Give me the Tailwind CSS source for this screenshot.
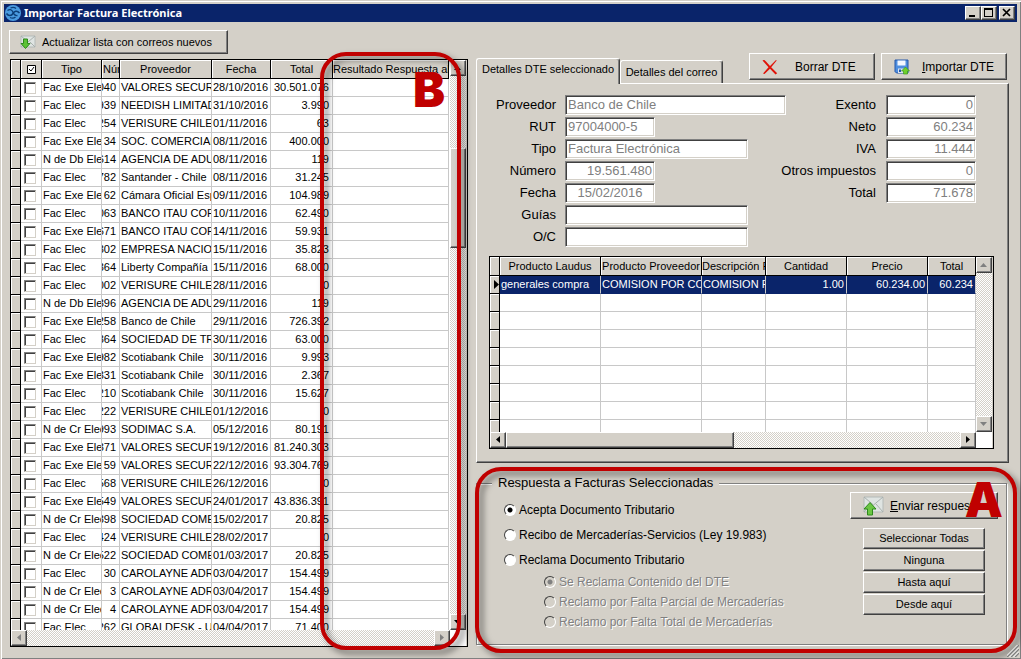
<!DOCTYPE html>
<html lang="es">
<head>
  <meta charset="UTF-8" />
  <meta name="viewport" content="width=device-width, initial-scale=1" />
  <title>Importar Factura Electrónica</title>
  <script src="https://cdn.jsdelivr.net/npm/@tailwindcss/browser@4"></script>
</head>
<body class="h-screen flex flex-col overflow-hidden bg-[#d4d0c8] p-1 pb-3 font-['Liberation_Sans',Arial,sans-serif] text-[11px] text-black shadow-[inset_1px_1px_#d4d0c8,inset_2px_2px_#fff,inset_-1px_-1px_#808080]">

  <!-- title bar -->
  <header class="h-[18px] shrink-0 flex items-center bg-[#0a246a] pl-px pr-0.5">
    <svg class="size-4" viewBox="0 0 16 16">
      <circle cx="8" cy="8" r="8" fill="#4a9be0" />
      <path d="M1.500 8.500c2 3 5 2.500 6.500 0s4-3.500 6.500-.5" fill="none" stroke="#0d3f78" stroke-width="1.500" />
      <path d="M2.500 5.500c2-1.500 4-1 5 .8s1.500 5 5 4.200M5 12.500c2 1 4 .8 5.500-.5M5.500 3c2-1 4-.8 5.500.5" fill="none" stroke="#0d3f78" stroke-width="1.300" />
    </svg>
    <h1 class="flex-1 pl-[3px] font-['Noto_Sans',sans-serif] text-[11px] leading-[18px] font-bold text-white">Importar Factura Electrónica</h1>
    <div class="flex">
      <button aria-label="Minimizar" class="w-4 h-3.5 bg-[#d4d0c8] border border-t-white border-l-white border-r-[#404040] border-b-[#404040] shadow-[inset_-1px_-1px_#808080]">
        <svg class="block" width="14" height="12" viewBox="0 0 14 12"><path d="M3 8h6v2H3z" /></svg>
      </button>
      <button aria-label="Maximizar" class="w-4 h-3.5 bg-[#d4d0c8] border border-t-white border-l-white border-r-[#404040] border-b-[#404040] shadow-[inset_-1px_-1px_#808080]">
        <svg class="block" width="14" height="12" viewBox="0 0 14 12"><path d="M2 1h9v9H2zM3 3v6h7V3z" fill-rule="evenodd" /></svg>
      </button>
      <button aria-label="Cerrar" class="ml-0.5 w-4 h-3.5 bg-[#d4d0c8] border border-t-white border-l-white border-r-[#404040] border-b-[#404040] shadow-[inset_-1px_-1px_#808080]">
        <svg class="block" width="14" height="12" viewBox="0 0 14 12"><path d="M3 2l7 7M10 2l-7 7" stroke="#000" stroke-width="1.7" /></svg>
      </button>
    </div>
  </header>

  <main class="flex-1 min-h-0 flex gap-2 pl-1.5 pr-2">

    <!-- left: list of invoices -->
    <section class="flex-[458_1_0%] min-w-0 flex flex-col pt-2">
      <div class="flex -ml-px">
        <button class="h-6 w-[219px] flex items-center gap-1.5 pl-2.5 bg-[#d4d0c8] border border-t-white border-l-white border-r-[#404040] border-b-[#404040] shadow-[inset_-1px_-1px_#808080]">
          <svg class="w-4 h-3.5" viewBox="0 0 16 14">
            <path d="M1 1h14v11H1z" fill="#dfe4e2" stroke="#b4bab8" />
            <path d="M1 1l7 6 7-6M1 12l5-5M15 12l-5-5" fill="none" stroke="#a9b0ae" />
            <path d="M3.500 4h4v4.500h2.500l-4.500 5-4.500-5h2.500z" fill="#5cc234" stroke="#2d8a1c" />
          </svg>
          <span>Actualizar lista con correos nuevos</span>
        </button>
      </div>

      <div class="relative mt-[5px] flex-1 min-h-0 flex flex-col border border-black pr-px">
        <div class="flex-1 min-h-0 flex">
          <div class="flex-1 min-w-0 overflow-hidden bg-white pr-px">
            <table class="w-full table-fixed border-separate border-spacing-0">
              <colgroup>
                <col class="w-2.5" /><col class="w-[21px]" /><col class="w-[60px]" /><col class="w-[18px]" />
                <col class="w-[92px]" /><col class="w-[59px]" /><col class="w-[62px]" /><col />
              </colgroup>
              <thead>
                <tr class="h-[19px] bg-[#d4d0c8] whitespace-nowrap *:p-0 *:font-normal *:overflow-hidden *:border-r *:border-b *:border-black *:shadow-[inset_1px_1px_#fff]">
                  <th></th>
                  <th>
                    <svg class="mx-auto" width="9" height="9" viewBox="0 0 9 9"><path d="M.5.5h8v8h-8z" fill="#fff" stroke="#000" /><path d="M2 4l2 2 3-4" fill="none" stroke="#000" /></svg>
                  </th>
                  <th>Tipo</th>
                  <th><div class="text-left pl-px">Núm</div></th>
                  <th>Proveedor</th>
                  <th>Fecha</th>
                  <th>Total</th>
                  <th><div class="text-left">Resultado Respuesta al</div></th>
                </tr>
              </thead>
              <tbody id="facturas"></tbody>
            </table>
          </div>
          <div class="w-4 flex flex-col bg-[conic-gradient(#fff_25%,#d4d0c8_0_50%,#fff_0_75%,#d4d0c8_0)] bg-[length:2px_2px]">
            <button aria-label="Subir" class="size-4 bg-[#d4d0c8] border border-t-white border-l-white border-r-[#404040] border-b-[#404040] shadow-[inset_-1px_-1px_#808080]">
              <svg class="block" width="14" height="14" viewBox="0 0 14 14"><path d="M3 9l3.500-4L10 9z" /></svg>
            </button>
            <div class="grow-[72]"></div>
            <div class="h-[100px] bg-[#d4d0c8] border border-t-white border-l-white border-r-[#404040] border-b-[#404040] shadow-[inset_-1px_-1px_#808080]"></div>
            <div class="grow-[366]"></div>
            <button aria-label="Bajar" class="size-4 bg-[#d4d0c8] border border-t-white border-l-white border-r-[#404040] border-b-[#404040] shadow-[inset_-1px_-1px_#808080]">
              <svg class="block" width="14" height="14" viewBox="0 0 14 14"><path d="M3 5l3.500 4L10 5z" /></svg>
            </button>
          </div>
        </div>
        <div class="h-4 flex bg-white">
          <div class="flex-1 flex justify-between bg-[conic-gradient(#fff_25%,#d4d0c8_0_50%,#fff_0_75%,#d4d0c8_0)] bg-[length:2px_2px]">
            <button aria-label="Izquierda" class="size-4 bg-[#d4d0c8] border border-t-white border-l-white border-r-[#404040] border-b-[#404040] shadow-[inset_-1px_-1px_#808080]">
              <svg class="block" width="14" height="14" viewBox="0 0 14 14"><path d="M9 3L5 6.500 9 10z" fill="#808080" /></svg>
            </button>
            <button aria-label="Derecha" class="size-4 bg-[#d4d0c8] border border-t-white border-l-white border-r-[#404040] border-b-[#404040] shadow-[inset_-1px_-1px_#808080]">
              <svg class="block" width="14" height="14" viewBox="0 0 14 14"><path d="M5 3l4 3.500L5 10z" fill="#808080" /></svg>
            </button>
          </div>
          <div class="w-4"></div>
        </div>

        <!-- callout B -->
        <div class="pointer-events-none absolute -top-2 -bottom-1 right-1.5 w-[141px] rounded-[26px] border-4 border-[#c00000] drop-shadow-[4px_4px_3px_rgba(0,0,0,0.5)]"></div>
        <span class="pointer-events-none absolute top-1 right-[22px] font-['Inter',sans-serif] text-[48px] leading-[52px] font-black text-[#c00000]">B</span>
      </div>
    </section>

    <!-- right: detail and answer -->
    <section class="flex-[533_1_0%] min-w-0 flex flex-col pt-[31px]">
      <div class="h-[30px] shrink-0 flex items-start justify-between">
        <div role="tablist" class="self-end flex items-end">
          <button role="tab" aria-selected="true" class="relative z-10 -mb-px h-[26px] w-[144px] pb-1 bg-[#d4d0c8] rounded-t-[3px] border border-b-0 border-t-white border-l-white border-r-[#404040] shadow-[inset_-1px_0_#808080]">Detalles DTE seleccionado</button>
          <button role="tab" aria-selected="false" class="h-[23px] w-[103px] bg-[#d4d0c8] rounded-t-[3px] border border-b-0 border-t-white border-l-white border-r-[#404040] shadow-[inset_-1px_0_#808080]">Detalles del correo</button>
        </div>
        <div class="flex gap-1.5 pr-0.5 text-[12px]">
          <button class="h-[27px] w-[126px] flex items-center pl-3 bg-[#d4d0c8] border border-t-white border-l-white border-r-[#404040] border-b-[#404040] shadow-[inset_-1px_-1px_#808080]">
            <svg class="size-4" viewBox="0 0 16 16"><path d="M.5 1.500c1-1 2.500-.5 3.500 1l4 4.500 6-6 .7.500L9.200 8.300l6 6-1.700 1.200L8 9.700 2.500 15 1 14.500l5.500-6.200z" fill="#e01208" /></svg>
            <span class="pl-[17px]">Borrar DTE</span>
          </button>
          <button class="h-[27px] w-[126px] flex items-center pl-3 bg-[#d4d0c8] border border-t-white border-l-white border-r-[#404040] border-b-[#404040] shadow-[inset_-1px_-1px_#808080]">
            <svg class="size-4" viewBox="0 0 16 16">
              <path d="M1 1h13v13H2.500L1 12.500z" fill="#4f8fe0" stroke="#2456a8" />
              <path d="M3.500 1.500h8v5h-8z" fill="#f4f8ff" />
              <path d="M4 9.500h7V14H4z" fill="#dbe4f0" />
              <path d="M5 10.500h2V13H5z" fill="#2456a8" />
              <path d="M11.500 8l4 4h-2v3h-4v-3h-2z" fill="#6fd02c" stroke="#3d9a1a" stroke-width=".7" />
            </svg>
            <span class="pl-3"><u>I</u>mportar DTE</span>
          </button>
        </div>
      </div>

      <div role="tabpanel" class="flex-1 min-h-0 flex flex-col border border-t-white border-l-white border-r-[#404040] border-b-[#404040] shadow-[inset_-1px_-1px_#808080] pt-[11px] pb-[13px] pl-3 pr-3.5">
        <form class="flex justify-between items-start pr-[18px] text-[13px] whitespace-nowrap [&_input]:h-5 [&_input]:px-0.5 [&_input]:bg-white [&_input]:text-[#808080] [&_input]:border [&_input]:border-t-[#808080] [&_input]:border-l-[#808080] [&_input]:border-r-white [&_input]:border-b-white [&_input]:shadow-[inset_1px_1px_#404040,inset_-1px_-1px_#d4d0c8]">
          <div class="grid grid-cols-[67px_auto] gap-x-[9px] gap-y-0.5 leading-5 *:[label]:text-right">
            <label for="proveedor">Proveedor</label><input id="proveedor" class="w-[221px]" value="Banco de Chile" disabled />
            <label for="rut">RUT</label><input id="rut" class="w-[90px]" value="97004000-5" disabled />
            <label for="tipo">Tipo</label><input id="tipo" class="w-[183px]" value="Factura Electrónica" disabled />
            <label for="numero">Número</label><input id="numero" class="w-[90px] text-right" value="19.561.480" disabled />
            <label for="fecha">Fecha</label><input id="fecha" class="w-[90px] text-center" value="15/02/2016" disabled />
            <label for="guias">Guías</label><input id="guias" class="w-[183px]" />
            <label for="oc">O/C</label><input id="oc" class="w-[183px]" />
          </div>
          <!-- the longest label may reach left over the first column's short fields -->
          <div class="grid grid-cols-[80px_90px] gap-x-2.5 gap-y-0.5 leading-5 *:[label]:justify-self-end *:[input]:text-right">
            <label for="exento">Exento</label><input id="exento" value="0" disabled />
            <label for="neto">Neto</label><input id="neto" value="60.234" disabled />
            <label for="iva">IVA</label><input id="iva" value="11.444" disabled />
            <label for="otros">Otros impuestos</label><input id="otros" value="0" disabled />
            <label for="total">Total</label><input id="total" value="71.678" disabled />
          </div>
        </form>

        <div class="mt-[9px] flex-1 min-h-0 flex flex-col border border-black pr-px">
          <div class="flex-1 min-h-0 flex">
            <div class="flex-1 min-w-0 overflow-hidden bg-white">
              <table class="w-full table-fixed border-separate border-spacing-0 whitespace-nowrap">
                <colgroup>
                  <col class="w-2.5" /><col class="w-[101px]" /><col class="w-[101px]" /><col class="w-16" />
                  <col class="w-[81px]" /><col class="w-[81px]" /><col />
                </colgroup>
                <thead>
                  <tr class="h-[19px] bg-[#d4d0c8] *:p-0 *:font-normal *:overflow-hidden *:border-r *:border-b *:border-black *:shadow-[inset_1px_1px_#fff]">
                    <th></th><th>Producto Laudus</th><th>Producto Proveedor</th>
                    <th><div class="text-left">Descripción Proveedor</div></th>
                    <th>Cantidad</th><th>Precio</th><th>Total</th>
                  </tr>
                </thead>
                <tbody id="lineas">
                  <tr class="h-[18px] bg-[#0a246a] text-white *:p-0 *:overflow-hidden *:border-r *:border-r-[#c8c8c8] *:border-b *:border-b-[#0a246a]">
                    <td class="bg-[#d4d0c8] border-r-black! border-b-black! shadow-[inset_1px_1px_#fff]"><svg class="ml-1" width="5" height="9" viewBox="0 0 5 9"><path d="M0 0l5 4.500L0 9z" /></svg></td>
                    <td><div class="pl-px">generales compra</div></td>
                    <td><div class="pl-px">COMISION POR COBRANZA</div></td>
                    <td><div class="pl-px">COMISION POR COBRANZA</div></td>
                    <td class="text-right"><div class="pr-0.5">1.00</div></td>
                    <td class="text-right"><div class="pr-0.5">60.234.00</div></td>
                    <td class="text-right"><div class="pr-0.5">60.234</div></td>
                  </tr>
                </tbody>
              </table>
            </div>
            <div class="w-4 flex flex-col justify-between bg-[conic-gradient(#fff_25%,#d4d0c8_0_50%,#fff_0_75%,#d4d0c8_0)] bg-[length:2px_2px]">
              <button aria-label="Subir" class="size-4 bg-[#d4d0c8] border border-t-white border-l-white border-r-[#404040] border-b-[#404040] shadow-[inset_-1px_-1px_#808080]">
                <svg class="block" width="14" height="14" viewBox="0 0 14 14"><path d="M3 9l3.500-4L10 9z" fill="#808080" /></svg>
              </button>
              <button aria-label="Bajar" class="size-4 bg-[#d4d0c8] border border-t-white border-l-white border-r-[#404040] border-b-[#404040] shadow-[inset_-1px_-1px_#808080]">
                <svg class="block" width="14" height="14" viewBox="0 0 14 14"><path d="M3 5l3.500 4L10 5z" fill="#808080" /></svg>
              </button>
            </div>
          </div>
          <div class="h-4 flex bg-white">
            <div class="flex-1 flex bg-[conic-gradient(#fff_25%,#d4d0c8_0_50%,#fff_0_75%,#d4d0c8_0)] bg-[length:2px_2px]">
              <button aria-label="Izquierda" class="size-4 bg-[#d4d0c8] border border-t-white border-l-white border-r-[#404040] border-b-[#404040] shadow-[inset_-1px_-1px_#808080]">
                <svg class="block" width="14" height="14" viewBox="0 0 14 14"><path d="M9 3L5 6.500 9 10z" /></svg>
              </button>
              <div class="grow-[228] bg-[#d4d0c8] border border-t-white border-l-white border-r-[#404040] border-b-[#404040] shadow-[inset_-1px_-1px_#808080]"></div>
              <div class="grow-[228]"></div>
              <button aria-label="Derecha" class="size-4 bg-[#d4d0c8] border border-t-white border-l-white border-r-[#404040] border-b-[#404040] shadow-[inset_-1px_-1px_#808080]">
                <svg class="block" width="14" height="14" viewBox="0 0 14 14"><path d="M5 3l4 3.500L5 10z" /></svg>
              </button>
            </div>
            <div class="w-4"></div>
          </div>
        </div>
      </div>

      <div class="relative mt-3 pr-0.5 pb-0.5">
        <fieldset class="border border-[#808080] shadow-[1px_1px_#fff,inset_1px_1px_#fff]">
          <legend class="ml-[15px] px-1.5 bg-[#d4d0c8] text-[13px] leading-4">Respuesta a Facturas Seleccionadas</legend>
          <div class="flex justify-between pl-[27px] pr-2 pb-3 text-[12px]">
            <div class="pt-1.5 [&_label]:flex [&_label]:items-center [&_label]:gap-[3px] [&_input]:appearance-none [&_input]:size-3 [&_input]:rounded-full [&_input]:border [&_input]:border-t-[#404040] [&_input]:border-l-[#404040] [&_input]:border-r-white [&_input]:border-b-white">
              <label class="h-[25px]"><input type="radio" name="respuesta" checked class="bg-white checked:bg-[radial-gradient(#000_2px,#fff_3px)]" />Acepta Documento Tributario</label>
              <label class="h-[25px]"><input type="radio" name="respuesta" class="bg-white" />Recibo de Mercaderías-Servicios (Ley 19.983)</label>
              <label class="h-[25px]"><input type="radio" name="respuesta" class="bg-white" />Reclama Documento Tributario</label>
              <div class="pl-10 text-[#808080] [text-shadow:1px_1px_#fff]">
                <label class="h-5"><input type="radio" name="reclamo" checked disabled class="checked:bg-[radial-gradient(#808080_2px,#d4d0c8_3px)]" />Se Reclama Contenido del DTE</label>
                <label class="h-5"><input type="radio" name="reclamo" disabled />Reclamo por Falta Parcial de Mercaderías</label>
                <label class="h-5"><input type="radio" name="reclamo" disabled />Reclamo por Falta Total de Mercaderías</label>
              </div>
            </div>
            <div class="flex flex-col items-end pt-px">
              <button class="h-[27px] w-[148px] flex items-center gap-1.5 pl-3 whitespace-nowrap overflow-hidden bg-[#d4d0c8] border border-t-white border-l-white border-r-[#404040] border-b-[#404040] shadow-[inset_-1px_-1px_#808080]">
                <svg class="w-[21px] h-5 shrink-0" viewBox="0 0 21 20">
                  <path d="M1 1h19v15H1z" fill="#dfe4e2" stroke="#b4bab8" />
                  <path d="M1 1l9.500 8L20 1M1 16l7-8M20 16l-7-8" fill="none" stroke="#a9b0ae" />
                  <path d="M7 6.500l6 6.500H9.500v6h-5v-6H1z" fill="#6cc644" stroke="#2d8a1c" />
                </svg>
                <span><u>E</u>nviar respuestas</span>
              </button>
              <div class="mt-[9px] mr-[13px] w-[122px] flex flex-col gap-px text-[11px] *:h-[21px] *:bg-[#d4d0c8] *:border *:border-t-white *:border-l-white *:border-r-[#404040] *:border-b-[#404040] *:shadow-[inset_-1px_-1px_#808080]">
                <button>Seleccionar Todas</button>
                <button>Ninguna</button>
                <button>Hasta aquí</button>
                <button>Desde aquí</button>
              </div>
            </div>
          </div>
        </fieldset>

        <!-- callout A -->
        <div class="pointer-events-none absolute -top-2 -bottom-1.5 -left-px -right-2 rounded-[26px] border-4 border-[#c00000] drop-shadow-[4px_4px_3px_rgba(0,0,0,0.5)]"></div>
        <span class="pointer-events-none absolute -top-px right-1.5 font-['Inter',sans-serif] text-[48px] leading-[52px] font-black text-[#c00000]">A</span>
      </div>
    </section>
  </main>

  <!-- resize grip -->
  <svg class="absolute right-0.5 bottom-0.5" width="12" height="12" viewBox="0 0 12 12">
    <path d="M0 12L12 0M4 12l8-8M8 12l4-4" stroke="#808080" stroke-width="1.500" />
    <path d="M-1.500 12L12-1.500M2.500 12L12 2.500M6.500 12L12 6.500" stroke="#fff" />
  </svg>

  <script>
    const facturas = [
      ['Fac Exe Elec', '040', 'VALORES SECURITY', '28/10/2016', '30.501.076'],
      ['Fac Elec', '939', 'NEEDISH LIMITADA', '31/10/2016', '3.990'],
      ['Fac Elec', '254', 'VERISURE CHILE SPA', '01/11/2016', '63'],
      ['Fac Exe Elec', '34', 'SOC. COMERCIALIZADORA', '08/11/2016', '400.000'],
      ['N de Db Elec', '614', 'AGENCIA DE ADUANAS', '08/11/2016', '119'],
      ['Fac Elec', '782', 'Santander - Chile', '08/11/2016', '31.245'],
      ['Fac Exe Elec', '62', 'Cámara Oficial Española', '09/11/2016', '104.989'],
      ['Fac Elec', '063', 'BANCO ITAU CORPBANCA', '10/11/2016', '62.490'],
      ['Fac Exe Elec', '671', 'BANCO ITAU CORPBANCA', '14/11/2016', '59.931'],
      ['Fac Elec', '302', 'EMPRESA NACIONAL', '15/11/2016', '35.823'],
      ['Fac Elec', '364', 'Liberty Compañía de', '15/11/2016', '68.000'],
      ['Fac Elec', '002', 'VERISURE CHILE SPA', '28/11/2016', '0'],
      ['N de Db Elec', '396', 'AGENCIA DE ADUANAS', '29/11/2016', '119'],
      ['Fac Exe Elec', '258', 'Banco de Chile', '29/11/2016', '726.392'],
      ['Fac Elec', '364', 'SOCIEDAD DE TRANSPORTES', '30/11/2016', '63.000'],
      ['Fac Exe Elec', '982', 'Scotiabank Chile', '30/11/2016', '9.993'],
      ['Fac Exe Elec', '331', 'Scotiabank Chile', '30/11/2016', '2.367'],
      ['Fac Elec', '210', 'Scotiabank Chile', '30/11/2016', '15.627'],
      ['Fac Elec', '222', 'VERISURE CHILE SPA', '01/12/2016', '0'],
      ['N de Cr Elec', '993', 'SODIMAC S.A.', '05/12/2016', '80.191'],
      ['Fac Exe Elec', '371', 'VALORES SECURITY', '19/12/2016', '81.240.303'],
      ['Fac Exe Elec', '59', 'VALORES SECURITY', '22/12/2016', '93.304.769'],
      ['Fac Elec', '568', 'VERISURE CHILE SPA', '26/12/2016', '0'],
      ['Fac Exe Elec', '549', 'VALORES SECURITY', '24/01/2017', '43.836.391'],
      ['N de Cr Elec', '398', 'SOCIEDAD COMERCIAL', '15/02/2017', '20.825'],
      ['Fac Elec', '424', 'VERISURE CHILE SPA', '28/02/2017', '0'],
      ['N de Cr Elec', '522', 'SOCIEDAD COMERCIAL', '01/03/2017', '20.825'],
      ['Fac Elec', '30', 'CAROLAYNE ADRIANA', '03/04/2017', '154.499'],
      ['N de Cr Elec', '3', 'CAROLAYNE ADRIANA', '03/04/2017', '154.499'],
      ['N de Cr Elec', '4', 'CAROLAYNE ADRIANA', '03/04/2017', '154.499'],
      ['Fac Elec', '262', 'GLOBALDESK - UNIDAD', '04/04/2017', '71.400'],
    ];

    document.getElementById('facturas').innerHTML = facturas.map(([tipo, num, prov, fecha, total]) => `
      <tr class="h-[18px] whitespace-nowrap *:p-0 *:overflow-hidden *:border-r *:border-b *:border-[#c8c8c8]">
        <td class="bg-[#d4d0c8] border-black! shadow-[inset_1px_1px_#fff]"></td>
        <td><input type="checkbox" aria-label="Seleccionar ${prov}" class="block ml-[3px] appearance-none size-3 bg-white border border-t-[#808080] border-l-[#808080] border-r-[#d4d0c8] border-b-[#d4d0c8] shadow-[inset_1px_1px_#404040]" /></td>
        <td><div class="pl-px">${tipo}</div></td>
        <td><div class="flex justify-end pr-[3px]">${num}</div></td>
        <td><div class="pl-px">${prov}</div></td>
        <td><div class="pl-px">${fecha}</div></td>
        <td><div class="text-right pr-[3px]">${total}</div></td>
        <td></td>
      </tr>`).join('');

    // empty rows below the only detail line
    const vacia = `
      <tr class="h-[18px] *:p-0 *:border-r *:border-b *:border-[#c8c8c8]">
        <td class="bg-[#d4d0c8] border-black! shadow-[inset_1px_1px_#fff]"></td>
        <td></td><td></td><td></td><td></td><td></td><td></td>
      </tr>`;
    document.getElementById('lineas').insertAdjacentHTML('beforeend', vacia.repeat(8));
  </script>
</body>
</html>
